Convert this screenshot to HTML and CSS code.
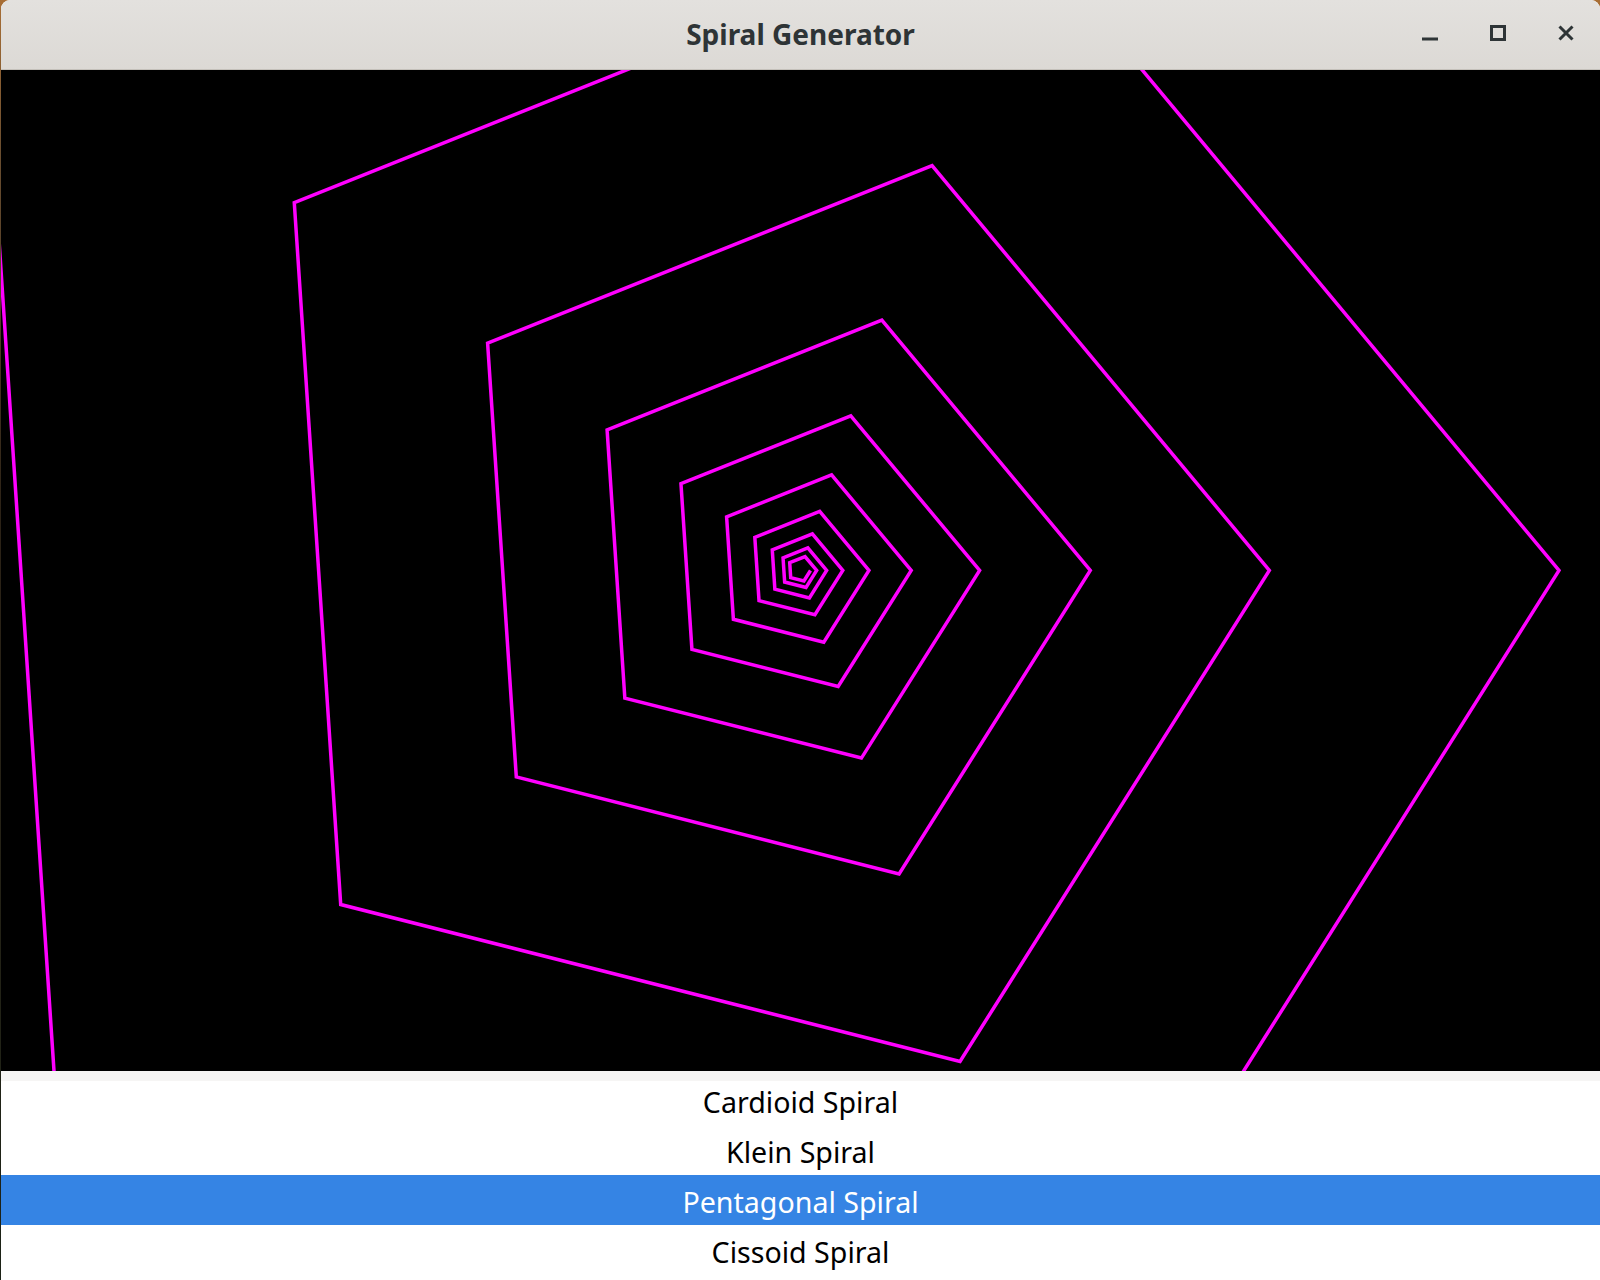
FILE: index.html
```html
<!DOCTYPE html>
<html lang="en">
<head>
<meta charset="utf-8">
<title>Spiral Generator</title>
<link rel="stylesheet" href="styles.css">
</head>
<body>
<div class="window">
  <header class="titlebar">
    <div class="tb-side"></div>
    <h1 class="title">Spiral Generator</h1>
    <div class="tb-side tb-buttons">
      <div class="wbtn">
        <svg width="16" height="16" viewBox="0 0 16 16"><rect x="0" y="12.5" width="16" height="3" fill="#2e3436"/></svg>
      </div>
      <div class="wbtn">
        <svg width="16" height="16" viewBox="0 0 16 16"><rect x="1.5" y="1.5" width="13" height="13" fill="none" stroke="#2e3436" stroke-width="3"/></svg>
      </div>
      <div class="wbtn">
        <svg width="16" height="16" viewBox="0 0 16 16"><path d="M1.5 1.5 L14.5 14.5 M14.5 1.5 L1.5 14.5" stroke="#2e3436" stroke-width="3" fill="none"/></svg>
      </div>
    </div>
  </header>
  <main class="canvas-wrap">
    <canvas id="spiral" width="1599" height="1001"></canvas>
  </main>
  <div class="separator"></div>
  <div class="list-view">
    <ul class="list">
      <li class="item">Cardioid Spiral</li>
      <li class="item">Klein Spiral</li>
      <li class="item selected">Pentagonal Spiral</li>
      <li class="item">Cissoid Spiral</li>
    </ul>
  </div>
</div>
<script src="script.js"></script>
</body>
</html>
```

FILE: styles.css
```css
html, body {
  margin: 0;
  padding: 0;
}
body {
  width: 1600px;
  height: 1280px;
  overflow: hidden;
  background: linear-gradient(to bottom, #a86e34 0%, #6a4e30 12%, #2c2216 40%, #1c2216 100%);
}
.window {
  margin-left: 1px;
  width: 1599px;
  height: 1280px;
  border-radius: 9px 9px 0 0;
  overflow: hidden;
  display: flex;
  flex-direction: column;
  background: #ffffff;
}
.titlebar {
  height: 69px;
  flex: none;
  display: grid;
  grid-template-columns: 1fr auto 1fr;
  align-items: center;
  background: linear-gradient(to bottom, #e3e1de, #dcd9d5);
  border-bottom: 1px solid #c4c0ba;
}
.title {
  margin: 0;
  font-family: "Noto Sans", "Open Sans", sans-serif;
  font-weight: 700;
  font-size: 28px;
  line-height: 69px;
  color: #2e3436;
  white-space: nowrap;
}
.tb-buttons {
  display: flex;
  justify-content: flex-end;
  height: 69px;
}
.wbtn {
  width: 68px;
  height: 65px;
  display: flex;
  align-items: center;
  justify-content: center;
}
.wbtn svg {
  display: block;
}
.canvas-wrap {
  height: 1001px;
  flex: none;
  background: #000000;
}
#spiral {
  display: block;
}
.separator {
  height: 10px;
  flex: none;
  background: #f6f5f4;
}
.list-view {
  flex: 1;
  overflow: hidden;
  background: #ffffff;
}
.list {
  list-style: none;
  margin: -6px 0 0 0;
  padding: 0;
}
.item {
  height: 46px;
  padding-top: 4px;
  line-height: 46px;
  text-align: center;
  font-family: "Noto Sans", "Open Sans", sans-serif;
  font-size: 28.6px;
  color: #000000;
}
.item.selected {
  background: #3584e4;
  color: #ffffff;
}
```

FILE: script.js
```js
(function () {
  var c = document.getElementById('spiral');
  var ctx = c.getContext('2d');
  var cx = 799.5, cy = 500.5;
  var R0 = 758.5, q = 1.101;
  ctx.fillStyle = '#000';
  ctx.fillRect(0, 0, c.width, c.height);
  ctx.strokeStyle = '#ff00ff';
  ctx.lineWidth = 3.5;
  ctx.lineJoin = 'miter';
  ctx.miterLimit = 10;
  ctx.beginPath();
  for (var k = -4; k <= 45; k++) {
    var r = R0 * Math.pow(q, -k);
    var a = -k * 72 * Math.PI / 180;
    var x = cx + r * Math.cos(a);
    var y = cy + r * Math.sin(a);
    if (k === -4) ctx.moveTo(x, y); else ctx.lineTo(x, y);
  }
  ctx.stroke();
})();
```
